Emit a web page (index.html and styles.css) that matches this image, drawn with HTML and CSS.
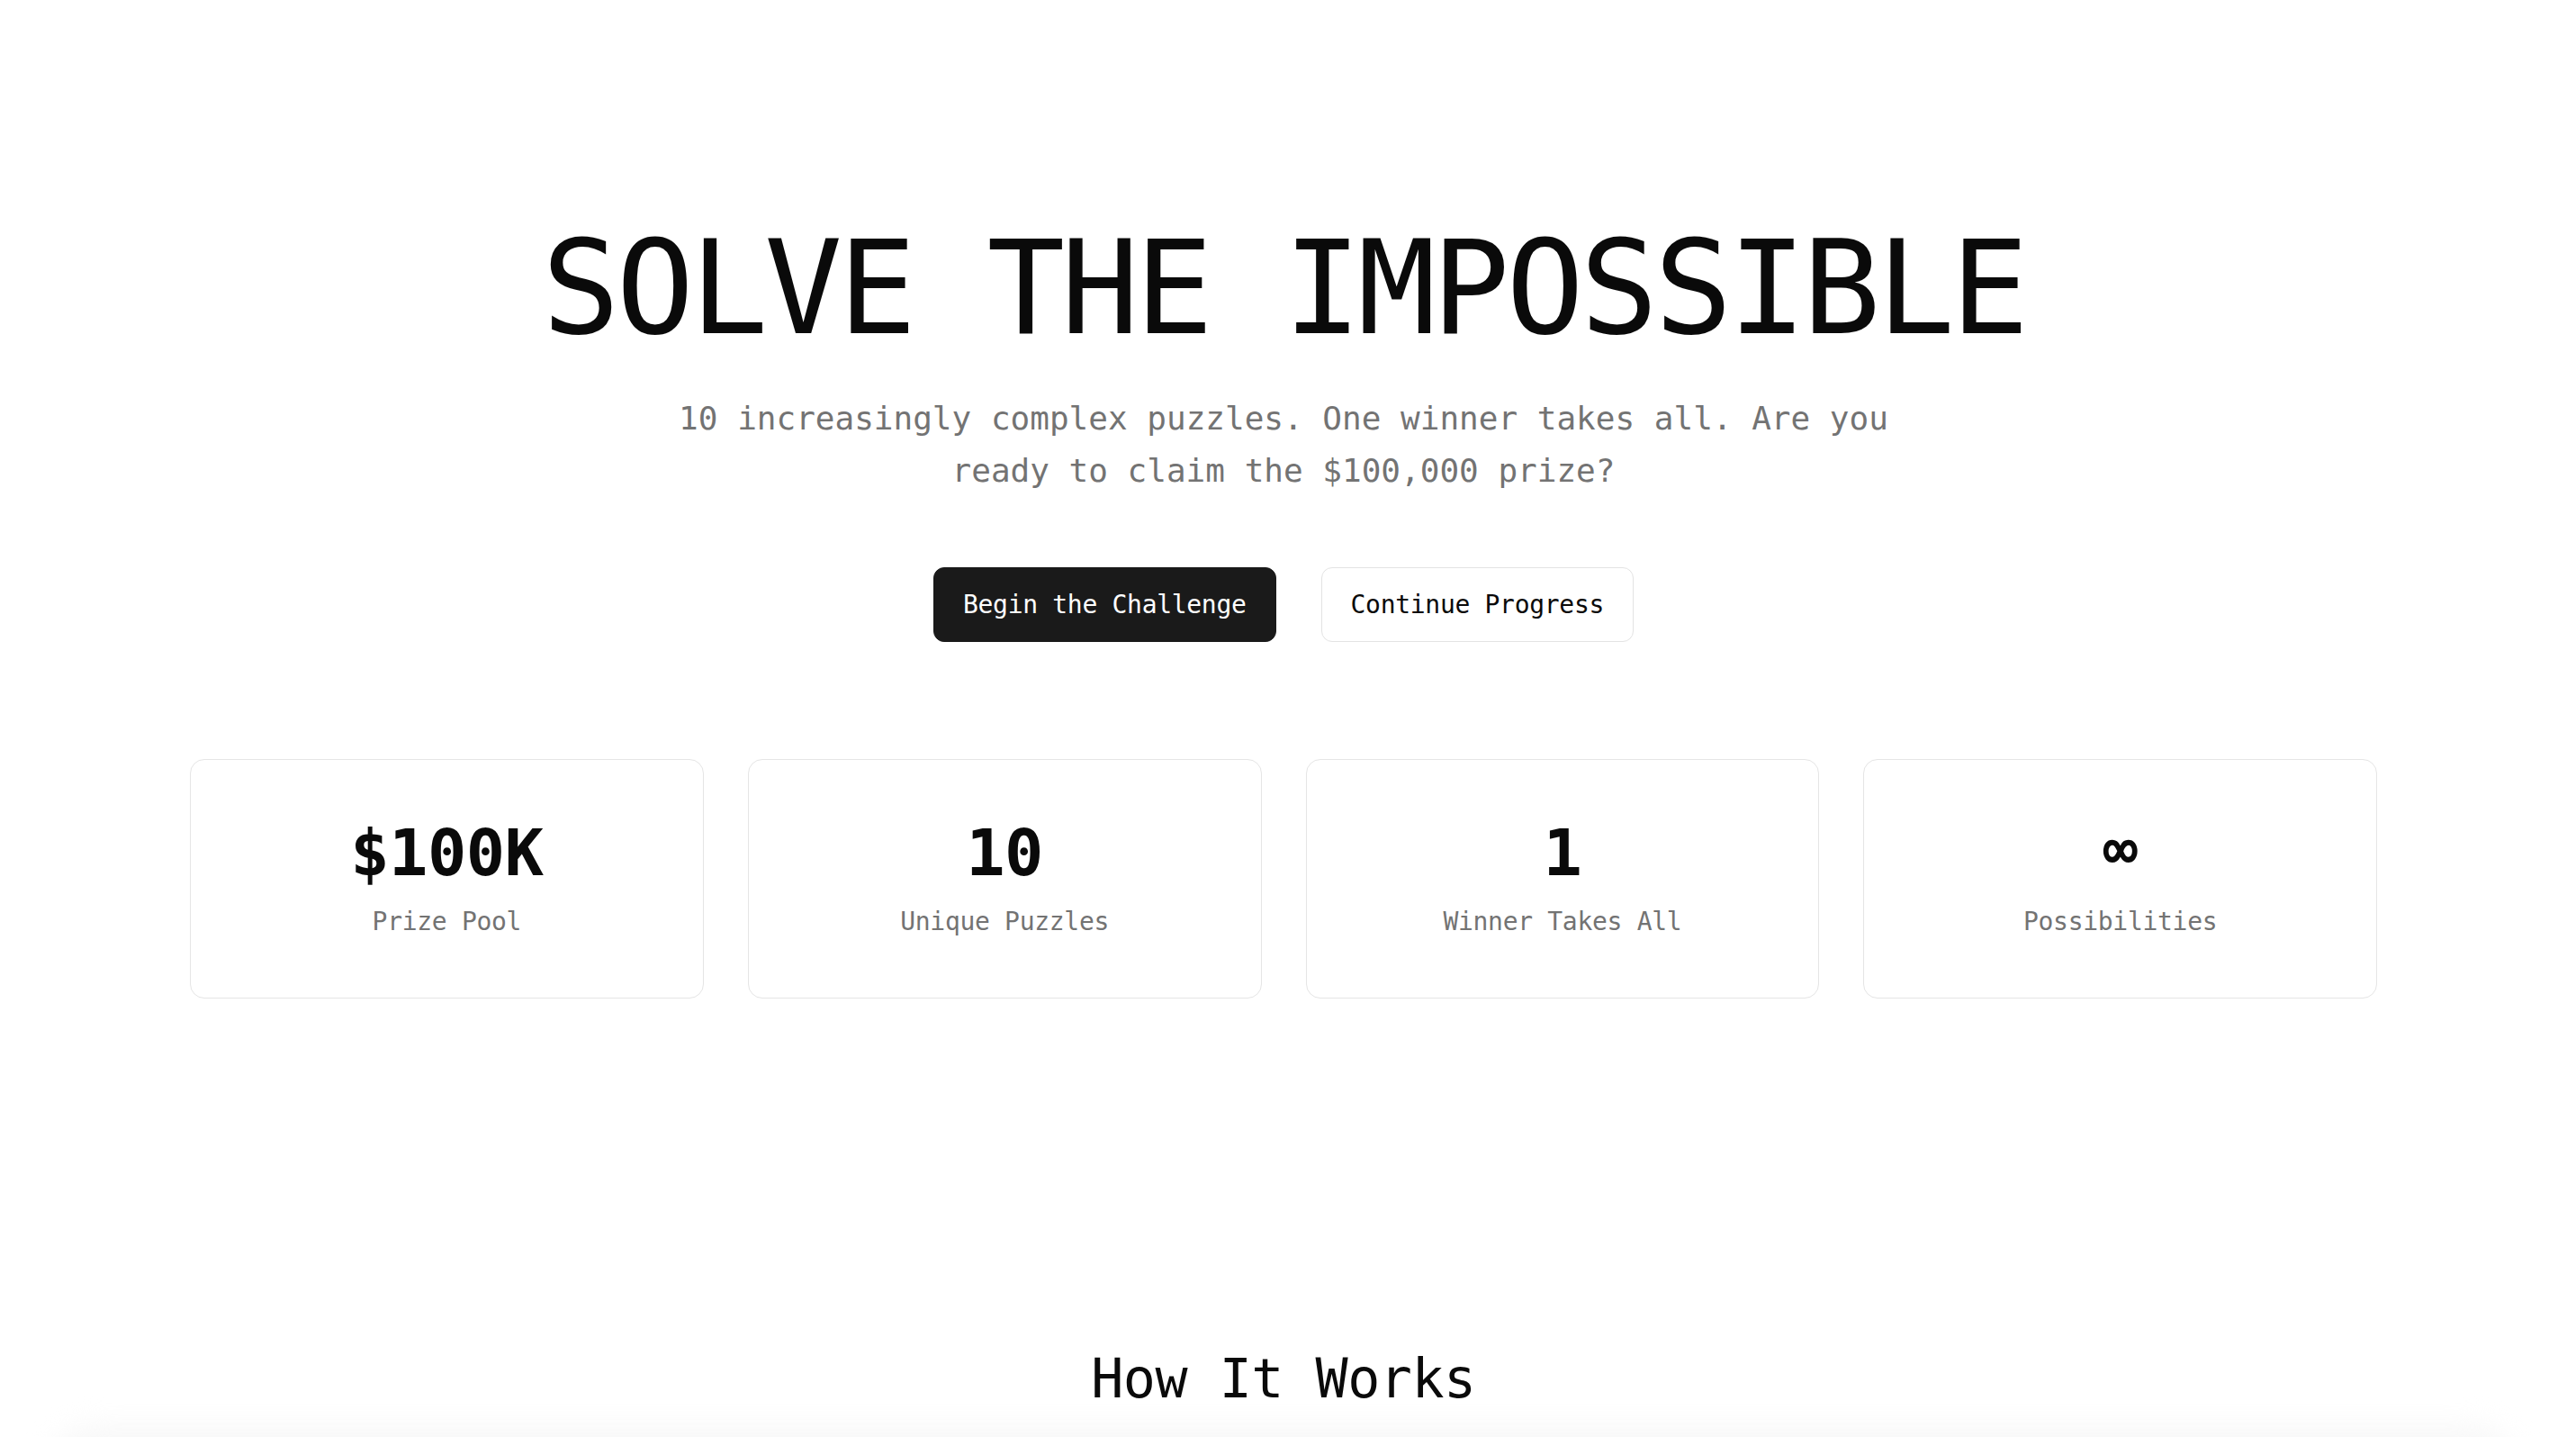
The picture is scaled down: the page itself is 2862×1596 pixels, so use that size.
FILE: index.html
```html
<!DOCTYPE html>
<html lang="en">
<head>
<meta charset="utf-8">
<title>Solve the Impossible</title>
<link rel="stylesheet" href="styles.css">
</head>
<body>
<main class="page">
  <section class="hero">
    <h1 class="hero-title">SOLVE THE IMPOSSIBLE</h1>
    <p class="hero-sub">10 increasingly complex puzzles. One winner takes all. Are you<br>ready to claim the $100,000 prize?</p>
    <div class="actions">
      <button class="btn btn-primary">Begin the Challenge</button>
      <button class="btn btn-outline">Continue Progress</button>
    </div>
    <div class="stats">
      <div class="stat">
        <div class="stat-value">$100K</div>
        <div class="stat-label">Prize Pool</div>
      </div>
      <div class="stat">
        <div class="stat-value">10</div>
        <div class="stat-label">Unique Puzzles</div>
      </div>
      <div class="stat">
        <div class="stat-value">1</div>
        <div class="stat-label">Winner Takes All</div>
      </div>
      <div class="stat">
        <div class="stat-value stat-inf">∞</div>
        <div class="stat-label">Possibilities</div>
      </div>
    </div>
  </section>
  <section class="how">
    <h2 class="how-title">How It Works</h2>
    <div class="how-panel"></div>
  </section>
</main>
</body>
</html>
```
FILE: styles.css
```css
* { box-sizing: border-box; }
html, body { margin: 0; padding: 0; background: #ffffff; }
body {
  font-family: "DejaVu Sans Mono", "Liberation Mono", monospace;
  color: #0a0a0a;
  overflow: hidden;
}
.page {
  display: flex;
  flex-direction: column;
  align-items: center;
  padding-right: 10px;
}
.hero {
  padding-top: 248px;
  display: flex;
  flex-direction: column;
  align-items: center;
  width: 100%;
}
.hero-title {
  margin: 0;
  font-size: 144px;
  line-height: 144px;
  font-weight: 400;
  letter-spacing: -4.3px;
  color: #0a0a0a;
}
.hero-sub {
  margin: 44px 0 0;
  font-size: 36px;
  line-height: 58px;
  color: #737373;
  text-align: center;
}
.actions {
  margin-top: 78px;
  display: flex;
  gap: 50px;
}
.btn {
  font-family: "DejaVu Sans Mono", "Liberation Mono", monospace;
  font-size: 28px;
  line-height: 35px;
  letter-spacing: -0.3px;
  border-radius: 12px;
  height: 83px;
  cursor: pointer;
}
.btn-primary {
  background: #1a1a1a;
  color: #ffffff;
  border: 1px solid #1a1a1a;
  padding: 0 32px;
}
.btn-outline {
  background: #ffffff;
  color: #0a0a0a;
  border: 1px solid #e3e3e3;
  padding: 0 32px;
}
.stats {
  margin-top: 130px;
  width: 2430px;
  display: grid;
  grid-template-columns: repeat(4, 1fr);
  gap: 49px;
}
.stat {
  border: 1px solid #e5e5e5;
  border-radius: 16px;
  padding: 63px 16px;
  display: flex;
  flex-direction: column;
  align-items: center;
  background: #fff;
}
.stat-value {
  font-size: 72px;
  line-height: 80px;
  font-weight: 700;
  letter-spacing: -0.5px;
}
.stat-inf {
  font-size: 64px;
  line-height: 72px;
  margin-bottom: 8px;
}
.stat-label {
  margin-top: 16px;
  font-size: 28px;
  line-height: 42px;
  color: #737373;
  letter-spacing: -0.3px;
}
.how {
  width: 100%;
  margin-top: 392px;
  display: flex;
  flex-direction: column;
  align-items: center;
}
.how-title {
  margin: 0;
  font-size: 60px;
  line-height: 60px;
  font-weight: 400;
  letter-spacing: -0.5px;
}
.how-panel {
  margin-top: 22px;
  width: calc(100% - 100px);
  height: 300px;
  background: #f8f8f8;
  border-radius: 60px;
  filter: blur(14px);
}
```
